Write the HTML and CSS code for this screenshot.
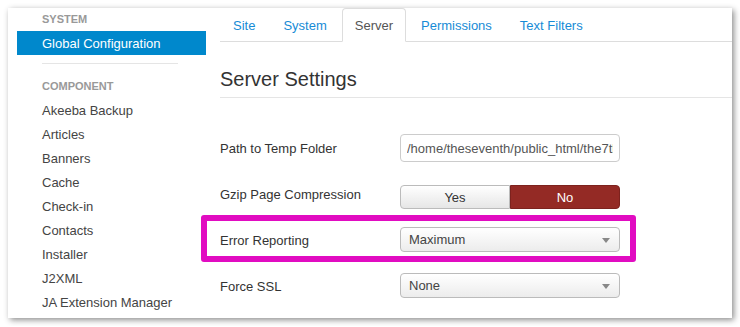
FILE: index.html
```html
<!DOCTYPE html>
<html lang="en">
<head>
  <meta charset="UTF-8" />
  <meta name="viewport" content="width=device-width, initial-scale=1.0" />
  <title>Global Configuration - Server</title>
  <link rel="stylesheet" href="styles.css">
</head>
<body>
  <div class="frame">
    <div class="sidebar">
      <div class="nav-header">System</div>
      <div class="nav-item active">Global Configuration</div>
      <div class="divider"></div>
      <div class="nav-header nav-header-2">Component</div>
      <div class="nav-item">Akeeba Backup</div>
      <div class="nav-item">Articles</div>
      <div class="nav-item">Banners</div>
      <div class="nav-item">Cache</div>
      <div class="nav-item">Check-in</div>
      <div class="nav-item">Contacts</div>
      <div class="nav-item">Installer</div>
      <div class="nav-item">J2XML</div>
      <div class="nav-item">JA Extension Manager</div>
    </div>

    <div class="main">
      <ul class="nav-tabs">
        <li><a href="#">Site</a></li>
        <li><a href="#">System</a></li>
        <li class="active"><a href="#">Server</a></li>
        <li><a href="#">Permissions</a></li>
        <li><a href="#">Text Filters</a></li>
      </ul>

      <h3 class="legend">Server Settings</h3>

      <div class="control-group">
        <label class="control-label">Path to Temp Folder</label>
        <input class="text-input" type="text" value="/home/theseventh/public_html/the7th/tmp" readonly />
      </div>

      <div class="control-group">
        <label class="control-label">Gzip Page Compression</label>
        <div class="btn-group">
          <span class="btn">Yes</span>
          <span class="btn btn-no">No</span>
        </div>
      </div>

      <div class="control-group marked">
        <label class="control-label">Error Reporting</label>
        <div class="select"><span>Maximum</span><i class="caret"></i></div>
      </div>

      <div class="control-group">
        <label class="control-label">Force SSL</label>
        <div class="select"><span>None</span><i class="caret"></i></div>
      </div>
    </div>
  </div>
</body>
</html>
```

FILE: styles.css
```css
body {
  margin: 0;
  padding: 8px;
  background-color: #fff;
  font-family: 'Liberation Sans', Arial, sans-serif;
  font-size: 13px;
  color: #333;
}

.frame {
  display: flex;
  width: 724px;
  height: 310px;
  overflow: hidden;
  background-color: #fff;
  box-shadow: 2px 2px 6px rgba(0, 0, 0, 0.45);
}

/* sidebar */

.sidebar {
  flex: 0 0 189px;
  padding-left: 9px;
  margin-right: 14px;
}

.nav-header {
  padding-left: 25px;
  line-height: 22px;
  padding-bottom: 1px;
  font-size: 11px;
  font-weight: bold;
  text-transform: uppercase;
  color: #999;
}

.nav-header-2 {
  line-height: 24px;
  padding-bottom: 0;
}

.nav-item {
  padding: 1px 0 0 25px;
  line-height: 23px;
  color: #444;
}

.nav-item.active {
  background-color: #0088cc;
  color: #fff;
}

.divider {
  height: 1px;
  width: 136px;
  margin: 8px 0 10px 25px;
  background-color: #e5e5e5;
}

/* main */

.main {
  flex: 1;
  min-width: 0;
}

.nav-tabs {
  display: flex;
  margin: 0;
  padding: 0;
  list-style: none;
  border-bottom: 1px solid #ddd;
}

.nav-tabs li {
  margin-right: 2px;
  margin-bottom: -1px;
}

.nav-tabs a {
  display: block;
  padding: 1px 12px 0;
  line-height: 31px;
  border: 1px solid transparent;
  border-radius: 4px 4px 0 0;
  color: #168bd6;
  text-decoration: none;
}

.nav-tabs .active a {
  color: #555;
  background-color: #fff;
  border-color: #ddd #ddd transparent;
}

.legend {
  margin: 25px 0 36px;
  padding-bottom: 6px;
  border-bottom: 1px solid #e5e5e5;
  font-size: 20px;
  font-weight: normal;
  line-height: 24px;
  color: #333;
}

.control-group {
  display: flex;
  align-items: flex-start;
  height: 28px;
  margin-bottom: 18px;
}

.control-label {
  flex: 0 0 180px;
  padding-top: 1px;
  line-height: 28px;
  color: #333;
}

.text-input {
  width: 220px;
  height: 28px;
  box-sizing: border-box;
  padding: 1px 6px 0;
  border: 1px solid #ccc;
  border-radius: 4px;
  font-family: inherit;
  font-size: 13px;
  color: #555;
  outline: none;
}

.btn-group {
  display: flex;
  width: 220px;
  height: 24px;
  margin-top: 5px;
}

.btn {
  flex: 1;
  padding-top: 1px;
  line-height: 21px;
  text-align: center;
  border: 1px solid #bbb;
  background: linear-gradient(#fff, #e6e6e6);
  color: #333;
  border-radius: 4px 0 0 4px;
}

.btn-no {
  border-color: #7d221e;
  background: #942a25;
  color: #fff;
  border-radius: 0 4px 4px 0;
}

.select {
  position: relative;
  width: 220px;
  height: 25px;
  margin-top: 1px;
  box-sizing: border-box;
  padding: 1px 0 0 8px;
  line-height: 22px;
  border: 1px solid #bbb;
  border-radius: 4px;
  background: linear-gradient(#fff, #ececec);
  color: #444;
}

.caret {
  position: absolute;
  right: 9px;
  top: 10px;
  border-left: 4px solid transparent;
  border-right: 4px solid transparent;
  border-top: 5px solid #888;
}

/* annotation frame */

.marked {
  position: relative;
}

.marked::after {
  content: "";
  position: absolute;
  left: -19px;
  top: -11px;
  width: 435px;
  height: 47px;
  box-sizing: border-box;
  border: 6px solid #e10cc1;
  border-radius: 3px;
}
```
